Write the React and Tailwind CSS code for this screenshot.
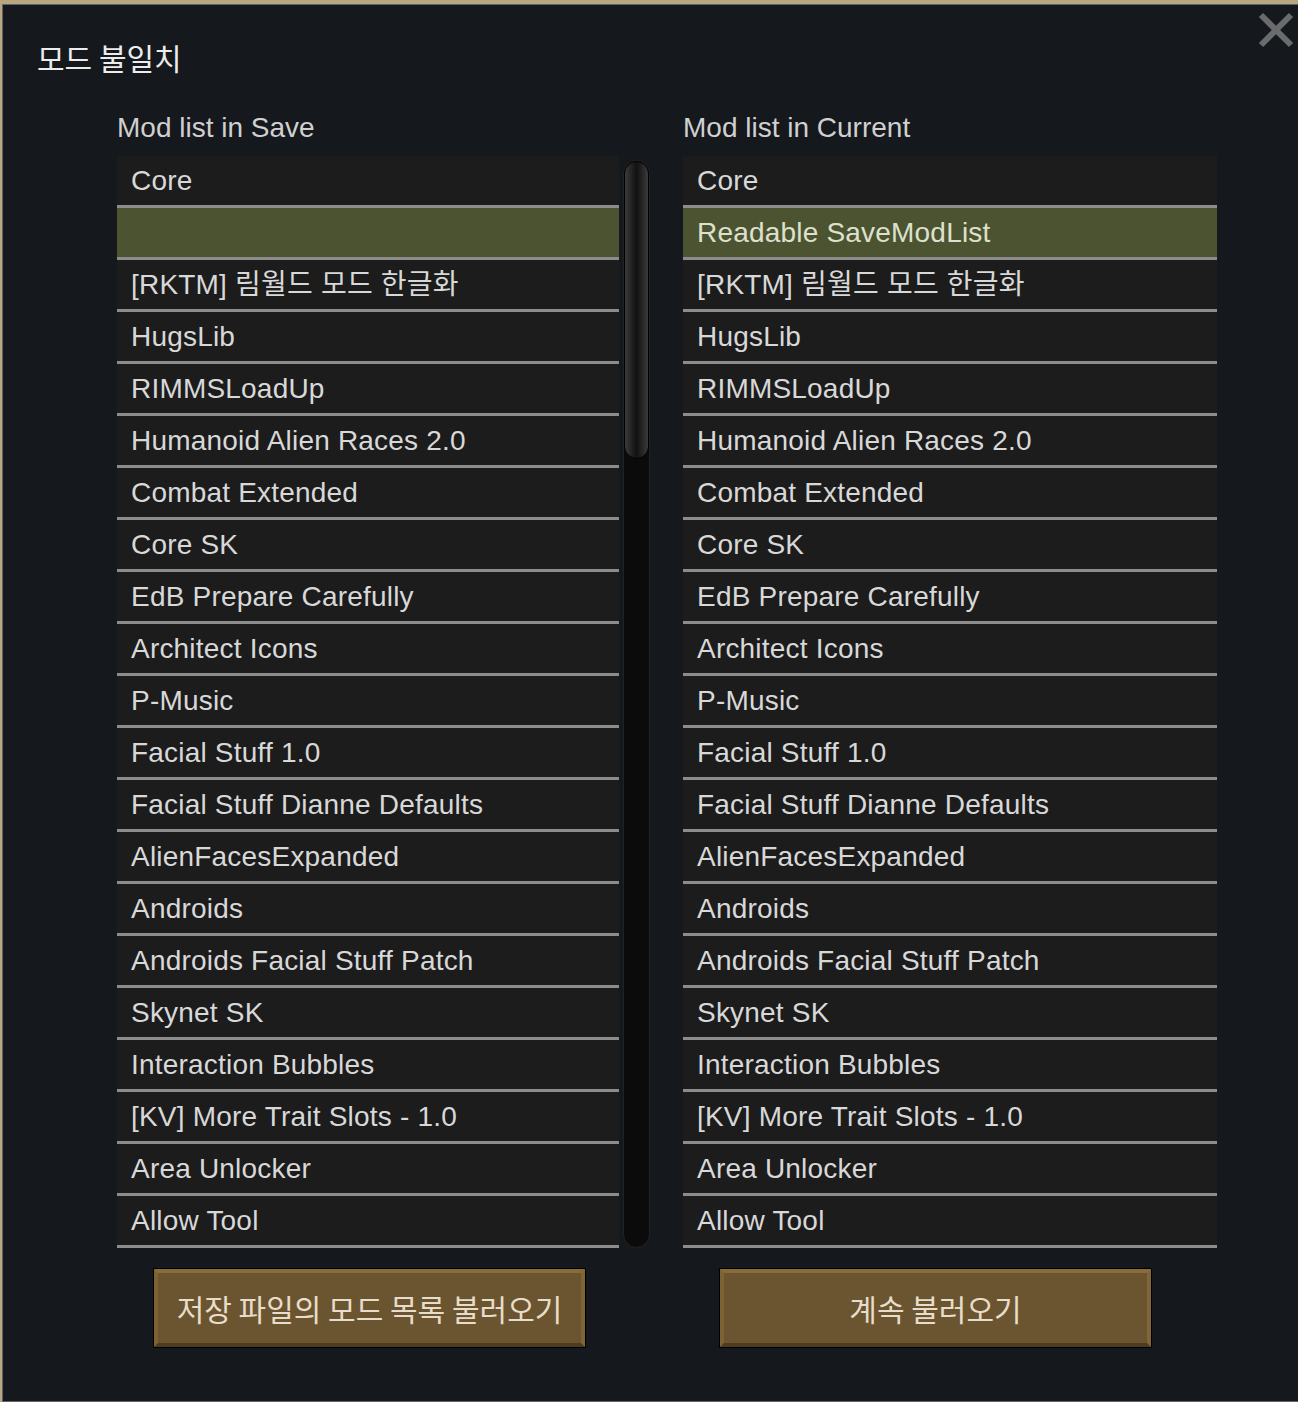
import React from 'react';

const mods = [
  'Core',
  '',
  '[RKTM] 림월드 모드 한글화',
  'HugsLib',
  'RIMMSLoadUp',
  'Humanoid Alien Races 2.0',
  'Combat Extended',
  'Core SK',
  'EdB Prepare Carefully',
  'Architect Icons',
  'P-Music',
  'Facial Stuff 1.0',
  'Facial Stuff Dianne Defaults',
  'AlienFacesExpanded',
  'Androids',
  'Androids Facial Stuff Patch',
  'Skynet SK',
  'Interaction Bubbles',
  '[KV] More Trait Slots - 1.0',
  'Area Unlocker',
  'Allow Tool',
];

const currentMods = mods.map((m, i) => (i === 1 ? 'Readable SaveModList' : m));

const font = { fontFamily: '"Liberation Sans", "Noto Sans CJK KR", sans-serif' };

function ModRow({ name, highlight }) {
  return (
    <div className="h-[52px] flex flex-col">
      <div
        className={
          'h-[49px] flex items-center pl-[14px] text-[28px] tracking-[0.2px] leading-none ' +
          (highlight ? 'bg-[#4c5331] text-[#dde0cc]' : 'bg-[#1c1c1d] text-[#d8d8d8]')
        }
      >
        {name}
      </div>
      <div className="h-[3px] bg-[#8c8c8c]" />
    </div>
  );
}

function ModList({ items }) {
  return (
    <div className="flex flex-col">
      {items.map((m, i) => (
        <ModRow key={i} name={m} highlight={i === 1} />
      ))}
    </div>
  );
}

function GameButton({ children }) {
  return (
    <button className="ml-[36px] w-[433px] h-[80px] border border-black bg-[#6b5530]">
      <div
        className="w-full h-full flex items-center justify-center border-[4px] border-t-[#8a6c3a] border-l-[#7d6234] border-r-[#806538] border-b-[#4c3d22] text-[30px] text-[#e8ddca]"
        style={{ fontFamily: '"Noto Sans CJK KR", sans-serif' }}
      >
        {children}
      </div>
    </button>
  );
}

export default function App() {
  return (
    <div className="w-[1298px] h-[1402px] bg-[#b8a67e] pt-[4px] pl-[2px] overflow-hidden" style={font}>
      <div className="relative w-[1300px] h-[1398px] bg-[#15181c] border border-[#5d636a]">
        <svg className="absolute top-[6px] right-[6px]" width="38" height="38" viewBox="0 0 38 38">
          <path d="M4 4 L34 34 M34 4 L4 34" stroke="#6a6b6d" strokeWidth="6" />
        </svg>

        <div
          className="pt-[34px] pl-[34px] text-[30px] leading-[36px] text-[#ececec]"
          style={{ fontFamily: '"Noto Sans CJK KR", sans-serif' }}
        >
          모드 불일치
        </div>

        <div className="flex pl-[114px] pt-[38px] gap-[33px]">
          <div className="flex flex-col">
            <div className="text-[28px] leading-[30px] text-[#d0d0d0] h-[43px]">Mod list in Save</div>
            <div className="flex gap-[4px]">
              <div className="w-[502px]">
                <ModList items={mods} />
              </div>
              <div className="w-[27px] mt-[4px] h-[1088px] rounded-full bg-[#0b0b0b] border border-[#222] overflow-hidden">
                <div className="h-[298px] rounded-full border border-black bg-gradient-to-r from-[#3b3b3b] via-[#111111] to-[#3b3b3b]" />
              </div>
            </div>
            <div className="mt-[20px]">
              <GameButton>저장 파일의 모드 목록 불러오기</GameButton>
            </div>
          </div>

          <div className="flex flex-col">
            <div className="text-[28px] leading-[30px] text-[#d0d0d0] h-[43px]">Mod list in Current</div>
            <div className="w-[534px]">
              <ModList items={currentMods} />
            </div>
            <div className="mt-[20px]">
              <GameButton>계속 불러오기</GameButton>
            </div>
          </div>
        </div>
      </div>
    </div>
  );
}
